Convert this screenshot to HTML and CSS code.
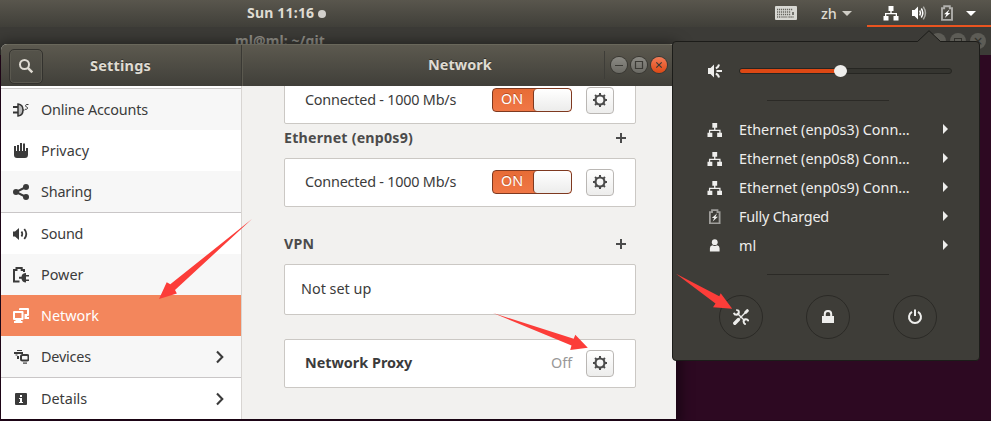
FILE: index.html
```html
<!DOCTYPE html>
<html lang="en">
<head>
<meta charset="utf-8">
<title>Settings</title>
<link rel="stylesheet" href="styles.css">
</head>
<body>
<svg class="defs" width="0" height="0">
  <symbol id="gear" viewBox="0 0 16 16">
    <circle cx="8" cy="8" r="4.500" fill="none" stroke="currentColor" stroke-width="2.200"/>
    <path d="M8 1v2.400M8 12.600V15M1 8h2.400M12.600 8H15M3.050 3.050l1.800 1.800M11.150 11.150l1.800 1.800M12.950 3.050l-1.800 1.800M4.850 11.150l-1.800 1.800" stroke="currentColor" stroke-width="2" fill="none"/>
  </symbol>
  <symbol id="wired" viewBox="0 0 16 16">
    <path fill="currentColor" d="M5.500 1h5v5H8.700v2H14v3h1.500v4.500h-5V11h2.200V9.300H3.300V11h2.200v4.500h-5V11H2V8h5.300V6H5.500z"/>
  </symbol>
  <symbol id="battery" viewBox="0 0 16 16">
    <path fill="none" stroke="currentColor" stroke-opacity=".55" stroke-width="1.900" d="M3 3.200h2.200V1.200h5.600v2H13v11.700H3z"/>
    <path fill="currentColor" d="M10.500 4.500 5 9.200h2.500L5.800 13l5.500-5H8.700z"/>
  </symbol>
  <symbol id="next" viewBox="0 0 10 16"><path d="M2 2.500 7.300 8 2 13.500" fill="none" stroke="currentColor" stroke-width="2.100"/></symbol>
</svg>
<div class="desktop">
  <section class="terminal">
    <span class="terminal-title">ml@ml: ~/git</span>
    <div class="terminal-controls"><i></i><i><b></b></i><i>×</i></div>
  </section>

  <header class="panel">
    <div class="clock"><span>Sun 11:16</span><i></i></div>
    <div class="input-source">
      <svg width="22" height="14" viewBox="0 0 22 14"><rect width="22" height="14" rx="1" fill="#d8d8d3"/><path d="M2 3.500h16M2 6h14M2 8.500h14M2 11h3M13.500 11h5" stroke="#66655f" stroke-width="1.500" stroke-dasharray="1.200 .8"/><path d="M5.500 11h7" stroke="#96958f" stroke-width="1.500"/><path d="M18 6v3" stroke="#55544e" stroke-width="1.500"/></svg>
      <span class="lang">zh</span>
      <i class="caret"></i>
    </div>
    <div class="status">
      <svg width="16" height="16"><use href="#wired"/></svg>
      <svg class="speaker" width="16" height="16" viewBox="0 0 16 16"><path fill="#fff" d="M1 5h2.500L7 1.500v13L3.500 11H1z"/><path d="M8.700 5.500q1.600 2.500 0 5M10.300 3.500q3 4.500 0 9" stroke="#fff" stroke-width="1.500" fill="none"/><path d="M12.300 1.600q4.300 6.400 0 12.800" stroke="#aaa9a4" stroke-width="1.500" fill="none"/></svg>
      <svg width="16" height="16"><use href="#battery"/></svg>
      <i class="caret"></i>
    </div>
  </header>

  <main class="window">
    <header class="titlebar">
      <div class="title-left">
        <button class="search"><svg width="16" height="16" viewBox="0 0 16 16"><circle cx="6.500" cy="6.500" r="4.500" fill="none" stroke="currentColor" stroke-width="2"/><path d="m9.800 9.800 4.500 4.500" stroke="currentColor" stroke-width="2.500"/></svg></button>
        <h1 class="t-settings">Settings</h1>
      </div>
      <div class="title-right">
        <h1 class="t-network">Network</h1>
        <div class="controls">
          <button><svg viewBox="0 0 16 16"><path d="M4 8.500h8"/></svg></button>
          <button><svg viewBox="0 0 16 16"><path d="M4.500 4.500h7v7h-7z"/></svg></button>
          <button class="close"><svg viewBox="0 0 16 16"><path d="m5.300 5.300 5.400 5.400m0-5.400-5.400 5.400"/></svg></button>
        </div>
      </div>
    </header>
    <div class="body">
      <nav class="sidebar">
        <a class="row odd"><svg viewBox="0 0 16 16"><path d="M0 5h5M0 10.500h5" stroke="#353535" stroke-width="2"/><path d="M5 2q5 .5 5 6t-5 6z" fill="#bbb" stroke="#353535" stroke-width="1.500"/><path d="M15.500 2.500q-3-.5-3 1.200 0 1 1.200 1.300 1.200.4.800 1.500-.3 1-2.500.8M10 8h1.500" fill="none" stroke="#353535" stroke-width="1"/></svg><span class="tight">Online Accounts</span></a>
        <a class="row"><svg viewBox="0 0 16 16"><path fill="currentColor" d="M1 3h2v5h1V2h2v6h1V0h2v8h1V0.500h2V8h1V5h2v6.500q0 3.500-3 3.500H4q-3 0-3-3z"/></svg><span>Privacy</span></a>
        <a class="row odd"><svg viewBox="0 0 16 16"><path d="M13 3 3 8l10 5" fill="none" stroke="currentColor" stroke-width="2"/><g fill="currentColor"><circle cx="13" cy="3" r="3"/><circle cx="3" cy="8" r="3"/><circle cx="13" cy="13" r="3"/></g></svg><span class="tight">Sharing</span></a>
        <a class="row sep"><svg viewBox="0 0 16 16"><path fill="currentColor" d="M0 5.500h2L6 2v12l-4-3.500H0z"/><path d="M8.500 5.500q1.500 2.500 0 5M11.300 3q4 5 0 10" stroke="currentColor" stroke-width="1.800" fill="none"/></svg><span class="tight">Sound</span></a>
        <a class="row odd"><svg viewBox="0 0 16 16"><path d="M6.500 14.500H1V3h2.500V1h5.200v2H11v2" stroke="currentColor" stroke-width="2" fill="none"/><path fill="currentColor" d="M13 6v2h3v1.500h-3v3h3V14h-3v1.500q-4 0-4.500-3.700H6V9.700h2.500Q9 6 13 6z"/></svg><span>Power</span></a>
        <a class="row active"><svg viewBox="0 0 16 16"><path fill="currentColor" fill-rule="evenodd" d="M0 4q0-1 1-1h8.500q1 0 1 1v7q0 1-1 1H8v1h1.500v2H1v-2h1.500v-1H1q-1 0-1-1zm2 1v5h6.500V5z"/><path fill="currentColor" d="M6 1q0-1 1-1h8q1 0 1 1v6q0 1-1 1h-1v1h2v2h-4.500V6H14V2H8H6z"/></svg><span>Network</span></a>
        <a class="row odd"><svg viewBox="0 0 16 16"><path fill="currentColor" d="M4 1h5v1H4zM1 3h9v2H1zM2.500 5.500h2v1h-2zM4 7h2v3H4z"/><rect x="8" y="6" width="7.500" height="5.500" rx="1.500" fill="none" stroke="currentColor" stroke-width="2"/><path fill="currentColor" d="M10 13.500h4v1.200h-4z"/></svg><span class="tight">Devices</span><svg class="chev"><use href="#next"/></svg></a>
        <a class="row sep"><svg viewBox="0 0 16 16"><rect x="2" y="2" width="12" height="12" rx="1" fill="currentColor"/><path fill="#fff" d="M7 4h2v2H7zM6 7h3v4h1v1H6v-1h1V8H6z"/></svg><span>Details</span><svg class="chev"><use href="#next"/></svg></a>
      </nav>
      <section class="content">
        <div class="card card-first"><span class="connected">Connected - 1000 Mb/s</span><span class="switch"><em>ON</em><i></i></span><button class="gear"><svg><use href="#gear"/></svg></button></div>
        <div class="heading h-eth"><h2 class="t-eth">Ethernet (enp0s9)</h2><i class="plus"></i></div>
        <div class="card"><span class="connected">Connected - 1000 Mb/s</span><span class="switch"><em>ON</em><i></i></span><button class="gear"><svg><use href="#gear"/></svg></button></div>
        <div class="heading h-vpn"><h2 class="t-vpn">VPN</h2><i class="plus"></i></div>
        <div class="card card-empty"><span>Not set up</span></div>
        <div class="card card-proxy"><strong>Network Proxy</strong><span class="off">Off</span><button class="gear"><svg><use href="#gear"/></svg></button></div>
      </section>
    </div>
  </main>

  <aside class="menu">
    <svg class="pointer" width="26" height="13" viewBox="0 0 26 13"><path d="M0 12 1.500 11.500 13 .7l11.500 10.800 1.500.5v1H0z" fill="#3e3d38"/><path d="M0 11.500h1.500L13 .7l11.500 10.800H26" fill="none" stroke="#1c1c19"/></svg>
    <div class="volume">
      <svg width="16" height="16" viewBox="0 0 16 16"><path fill="currentColor" d="M1 5h2.500L7 1.500v13L3.500 11H1z"/><path d="M9.500 8H15M8.800 5.200q2.500-.7 3.200-3.700M8.800 10.800q2.500.7 3.200 3.700" fill="none" stroke="currentColor" stroke-width="2"/></svg>
      <div class="slider"><i class="fill"></i><i class="knob"></i></div>
    </div>
    <hr>
    <ul>
      <li><svg><use href="#wired"/></svg><span class="eth">Ethernet (enp0s3) Conn…</span><i></i></li>
      <li><svg><use href="#wired"/></svg><span class="eth">Ethernet (enp0s8) Conn…</span><i></i></li>
      <li><svg><use href="#wired"/></svg><span class="eth">Ethernet (enp0s9) Conn…</span><i></i></li>
      <li><svg><use href="#battery"/></svg><span class="full">Fully Charged</span><i></i></li>
      <li><svg viewBox="0 0 16 16"><circle cx="8" cy="4.300" r="3" fill="currentColor"/><path fill="currentColor" d="M3 14V10.500Q3 8 5.500 7.500q2.500 1.700 5 0Q13 8 13 10.500V14z"/></svg><span>ml</span><i></i></li>
    </ul>
    <hr>
    <div class="actions">
      <button><svg viewBox="0 0 16 16"><path d="M4 4 12 12M13 3 7 9" stroke="currentColor" stroke-width="1.400"/><path d="M5.500 10.500 1.800 14.200" stroke="currentColor" stroke-width="3.400" stroke-linecap="round"/><path d="m12.800 3.200 1.500-1.500" stroke="currentColor" stroke-width="3" stroke-linecap="round"/><path d="M3.200 1.100q2.700-.2 2.700 2.200 0 2.400-2.500 2.500Q1.300 5.700.9 3.800M15.500 12.300q-.7-2.200-2.900-2-2.200.3-2 2.500.3 2 2.200 2.600" fill="none" stroke="currentColor" stroke-width="1.900"/></svg></button>
      <button><svg viewBox="0 0 16 16"><path d="M2 7h12v7H2z" fill="currentColor"/><path d="M4.800 8V5q0-3 3.200-3t3.200 3v3" fill="none" stroke="currentColor" stroke-width="2"/></svg></button>
      <button><svg viewBox="0 0 16 16"><path d="M5 2.900a6 6 0 1 0 6 0M8 .5v6.500" fill="none" stroke="currentColor" stroke-width="2"/></svg></button>
    </div>
  </aside>

  <svg class="arrows" width="991" height="421" viewBox="0 0 991 421" fill="#fc3d39">
    <path d="M252 219 170.300 284.300 166.700 282.300 159 298.900 176.900 293.500 175 290z"/>
    <path d="M493 313 573.700 338.700 575.300 334.800 587.800 347.700 570.200 350 571.500 345.500z"/>
    <path d="M676 273.800 719.300 296.300 720.700 293.200 732.200 308.700 713 307.200 715.500 303.600z"/>
  </svg>
</div>
</body>
</html>
```
FILE: styles.css
```css
* { box-sizing: border-box; }
body { margin: 0; font-family: "Noto Sans", "Open Sans", sans-serif; font-size: 14.4px; line-height: 20px; color: #3b3b3b; }
button { padding: 0; border: 0; background: none; color: inherit; }
h1, h2, ul { margin: 0; padding: 0; }
svg { display: block; flex: none; }
.defs { position: absolute; }

.desktop { position: relative; width: 991px; height: 421px; overflow: hidden; background: #2d0922; border-bottom: 1px solid #1d0516; }

.panel { position: relative; display: flex; height: 27px; color: #dfdbd2; background: linear-gradient(#59564d, #403f39); }
.clock { display: flex; align-items: center; width: 775px; padding: 0 0 2px 247px; gap: 3px; font-weight: 700; font-size: 14px; }
.clock span { width: 68px; white-space: nowrap; letter-spacing: .2px; }
.clock i { width: 8px; height: 8px; margin-top: 2px; border-radius: 50%; background: #d2d0cc; }
.input-source { display: flex; align-items: center; width: 92px; }
.input-source svg { margin-bottom: 2px; }
.lang { margin-left: 24px; width: 15px; font-weight: 500; }
.caret { width: 0; border: 5px solid transparent; border-top: 5px solid #cfcdc6; border-bottom: 0; margin-left: 6px; }
.status { display: flex; align-items: center; width: 124px; padding-left: 16px; border-bottom: 2px solid #e95420; color: #fff; }
.status svg { margin-right: 12px; }
.status .caret { border-top-color: #fff; margin-left: -1px; margin-top: 1px; }

.terminal { position: absolute; top: 27px; left: 0; width: 991px; height: 28px; background: #3c3b37; color: #918f88; }
.terminal-title { display: block; padding: 4px 0 0 235px; font-weight: 700; font-size: 14px; letter-spacing: .1px; }
.terminal-controls { position: absolute; right: 5px; top: 6px; display: flex; gap: 4px; }
.terminal-controls i { display: grid; place-items: center; width: 16px; height: 16px; border-radius: 50%; background: #5d5c56; color: #34332e; font: 16px/16px "Noto Sans", sans-serif; }
.terminal-controls b { width: 8px; height: 7px; border: 1px solid #34332e; }

.window { position: absolute; left: 1px; top: 44px; width: 675px; height: 375px; overflow: hidden; border-radius: 6px 6px 0 0; background: #f2f1ef; box-shadow: 0 3px 14px 4px rgba(0,0,0,.5); }
.titlebar { display: flex; height: 42px; color: #dfdbd2; background: linear-gradient(#5c594f, #403f39); border-top: 1px solid #69675b; text-shadow: 0 -1px #33322d; }
.title-left { display: flex; align-items: center; width: 241px; padding: 1px 0 0 8px; border-right: 1px solid #3a3934; }
.title-left h1 { margin: -3px 0 0 47px; }
h1 { font-size: 14.500px; line-height: 20px; font-weight: 700; }
.t-settings { letter-spacing: .2px; }
.search { display: grid; place-items: center; width: 34px; height: 35px; border: 1px solid #33322e; border-radius: 5px; background: linear-gradient(#55534a, #46453f); box-shadow: inset 0 0 0 1px #5a584f; }
.title-right { display: flex; flex: 1; align-items: center; border-left: 1px solid #5b594f; padding-left: 185px; }
.title-right h1 { margin-top: -3px; }
.controls { display: flex; align-items: center; gap: 4px; height: 28px; margin: -1px 9px 0 auto; padding-left: 6px; border-left: 1px solid #3e3d38; }
.controls button { width: 16px; height: 16px; border-radius: 50%; background: linear-gradient(#8b8a84, #6b6a64); box-shadow: 0 0 0 1px #393833; }
.controls .close { background: linear-gradient(#f37c58, #dd4814); }
.controls svg { width: 16px; height: 16px; fill: none; stroke: #3b3a35; stroke-width: 1.200; }

.body { display: flex; height: 333px; overflow: hidden; }
.sidebar { width: 241px; padding-top: 2px; background: #fff; border-right: 1px solid #d8d5d2; }
.row { display: flex; align-items: center; height: 41px; padding-left: 12px; color: #3b3b3b; }
.row:first-child { height: 42px; border-top: 1px solid #cbc9c8; }
.row svg { width: 16px; height: 16px; }
.row span { margin: 1px 0 0 12px; white-space: nowrap; }
.row .tight { letter-spacing: -.2px; }
.odd { background: #f7f7f7; }
.sep { height: 42px; border-top: 1px solid #c9c6c7; }
.active { background: #f3865c; }
.row.active { color: #fff; }
.row .chev { width: 10px; height: 16px; margin: 0 16px 0 auto; }

.content { flex: 1; padding: 0 40px 0 42px; }
.card { display: flex; align-items: center; height: 49px; padding: 0 21px 1px 20px; background: #fff; border: 1px solid #cbc8c4; border-radius: 2px; white-space: nowrap; }
.card-first { height: 49px; margin-top: -11px; }
.connected { width: 187px; letter-spacing: -.22px; }
.card-first > * { position: relative; top: 1px; }
.switch { display: flex; width: 80px; height: 24px; border: 1px solid #7e3920; border-radius: 4px; background: linear-gradient(#e76c36, #f07746); color: #fff; }
.switch em { width: 40px; padding-left: 8px; font-style: normal; line-height: 20px; text-shadow: 0 -1px #b84c20; }
.switch i { flex: 1; border-left: 1px solid #7e3920; border-radius: 4px; background: linear-gradient(#fff, #ececeb); }
.gear { display: grid; place-items: center; width: 28px; height: 27px; margin-left: auto; border: 1px solid #bab7b4; border-radius: 4px; background: linear-gradient(#fff, #ededec); color: #4b4b4b; }
.gear svg { width: 16px; height: 16px; }
.heading { display: flex; align-items: center; justify-content: space-between; padding-right: 10px; color: #4b4b4b; }
.heading h2 { font-size: 14.200px; line-height: 20px; letter-spacing: .22px; }
.h-eth { height: 34px; padding-bottom: 6px; }
.h-vpn { height: 57px; padding-top: 17px; }
.plus { width: 10px; height: 10px; background: linear-gradient(#4b4b4b, #4b4b4b) 50% / 10px 2px no-repeat, linear-gradient(#4b4b4b, #4b4b4b) 50% / 2px 10px no-repeat; }
.card-empty { height: 51px; padding-left: 16px; }
.card-proxy { margin-top: 24px; }
.off { margin-left: auto; width: 23px; color: #989898; }
.off + .gear { margin-left: 12px; }

.menu { position: absolute; left: 672px; top: 41px; width: 308px; height: 320px; padding-top: 14px; border: 1px solid #1c1c19; border-radius: 4px; background: #3e3d38; color: #eeeeec; }
.pointer { position: absolute; left: 243px; top: -12px; }
.volume { display: flex; align-items: center; height: 30px; padding-left: 34px; }
.slider { position: relative; width: 213px; height: 6px; margin-left: 16px; border: 1px solid #262622; border-radius: 3px; background: #353530; }
.fill { display: block; width: 101px; height: 4px; border-radius: 2px; background: #dd4814; }
.knob { position: absolute; left: 94px; top: -4px; width: 13px; height: 12px; border-radius: 50%; background: #eeeeec; }
.menu hr { width: 122px; height: 1px; margin: 14px 0 0 94px; border: 0; background: #2b2a26; }
.menu ul { list-style: none; margin-top: 14px; }
.menu li { display: flex; align-items: center; height: 29px; padding-left: 34px; }
.menu li svg { width: 15.500px; height: 15.500px; }
.menu li span { width: 190px; margin-left: 16.500px; white-space: nowrap; }
.menu li .full { letter-spacing: -.2px; }
.menu li i { margin: -1px 0 0 14px; border: 5px solid transparent; border-left-color: #eeeeec; border-right: 0; }
.menu ul + hr { margin-top: 14px; }
.actions { display: flex; gap: 43px; margin: 20px 0 0 46px; }
.actions button { display: grid; place-items: center; width: 44px; height: 44px; border: 1px solid #2b2a26; border-radius: 50%; }
.actions svg { width: 16px; height: 16px; }

.arrows { position: absolute; inset: 0; }
```
